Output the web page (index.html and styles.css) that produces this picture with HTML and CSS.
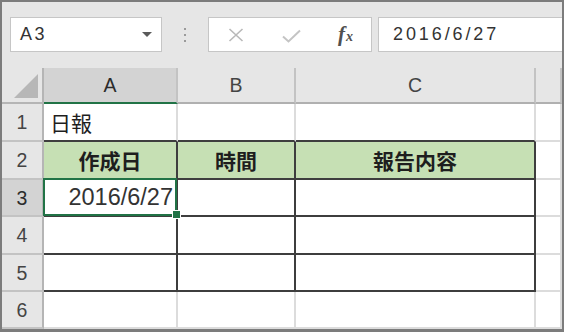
FILE: index.html
```html
<!DOCTYPE html>
<html lang="ja">
<head>
<meta charset="utf-8">
<link rel="stylesheet" href="styles.css">
</head>
<body>
<div class="frame">
  <div class="toolbar">
    <div class="namebox"><span class="name">A3</span><span class="caret"></span></div>
    <div class="grip"><i></i><i></i><i></i></div>
    <div class="fbtns">
      <svg class="cancel" width="16" height="14" viewBox="0 0 16 14"><path d="M1.5 1 L14.5 13 M14.5 1 L1.5 13" stroke="#b9b9b9" stroke-width="1.6" fill="none"/></svg>
      <svg class="enter" width="19" height="14" viewBox="0 0 19 14"><path d="M1 7.5 L6.5 12.5 L18 1.5" stroke="#c4c4c4" stroke-width="2" fill="none"/></svg>
      <span class="fx"><i>f</i><i class="sx">x</i></span>
    </div>
    <div class="finput">2016/6/27</div>
  </div>
  <div class="sheet">
    <div class="corner"><svg width="40" height="34" viewBox="0 0 40 34"><polygon points="36,6 36,30 12,30" fill="#b7b7b7"/></svg></div>
    <div class="ch sel">A</div>
    <div class="ch">B</div>
    <div class="ch">C</div>
    <div class="ch"></div>

    <div class="rh">1</div>
    <div class="c tt jp">日報</div>
    <div class="c tt"></div>
    <div class="c tt"></div>
    <div class="c"></div>

    <div class="rh">2</div>
    <div class="c tb g hd">作成日</div>
    <div class="c tb g hd">時間</div>
    <div class="c tb g hd">報告内容</div>
    <div class="c"></div>

    <div class="rh rsel">3</div>
    <div class="c tb cur num">2016/6/27</div>
    <div class="c tb"></div>
    <div class="c tb"></div>
    <div class="c"></div>

    <div class="rh">4</div>
    <div class="c tb"></div>
    <div class="c tb"></div>
    <div class="c tb"></div>
    <div class="c"></div>

    <div class="rh">5</div>
    <div class="c tb"></div>
    <div class="c tb"></div>
    <div class="c tb"></div>
    <div class="c"></div>

    <div class="rh">6</div>
    <div class="c"></div>
    <div class="c"></div>
    <div class="c"></div>
    <div class="c"></div>
  </div>
</div>
</body>
</html>
```
FILE: styles.css
```css
* { box-sizing: border-box; }
html, body { margin: 0; padding: 0; background: #fff; }
body { font-family: "Liberation Sans", Arial, sans-serif; }

.frame {
  width: 564px;
  height: 332px;
  border: 2px solid #7c7c7c;
  border-bottom-width: 3px;
  overflow: hidden;
  display: flex;
  flex-direction: column;
  background: #e6e6e6;
}

.toolbar {
  height: 66px;
  flex: none;
  display: flex;
  align-items: flex-start;
  padding: 15px 0 0 8px;
  background: #e6e6e6;
}

.namebox {
  width: 152px;
  height: 35px;
  background: #fff;
  border: 1px solid #c6c6c6;
  display: flex;
  align-items: center;
  padding: 0 9px 0 9px;
}
.name {
  font-size: 18px;
  letter-spacing: 2.4px;
  color: #333;
  flex: 1;
}
.caret {
  width: 0; height: 0;
  border-left: 5px solid transparent;
  border-right: 5px solid transparent;
  border-top: 5px solid #5a5a5a;
}

.grip {
  width: 46px;
  height: 35px;
  display: flex;
  flex-direction: column;
  align-items: center;
  justify-content: center;
  gap: 4px;
}
.grip i {
  width: 2px; height: 2px;
  background: #9a9a9a;
  display: block;
}

.fbtns {
  width: 164px;
  height: 35px;
  background: #fff;
  border: 1px solid #c6c6c6;
  display: flex;
  align-items: center;
}
.cancel { margin-left: 19px; }
.enter { margin-left: 38px; margin-top: 2px; }
.fx {
  margin-left: 37px;
  font-family: "Liberation Serif", serif;
  font-weight: bold;
  color: #505050;
  font-size: 21px;
  line-height: 1;
  display: flex;
  align-items: baseline;
}
.fx .sx { font-size: 14px; margin-left: 1px; }

.finput {
  flex: 1;
  height: 35px;
  margin-left: 6px;
  background: #fff;
  border: 1px solid #c6c6c6;
  border-right: none;
  display: flex;
  align-items: center;
  padding-left: 14px;
  font-size: 18px;
  letter-spacing: 2.9px;
  color: #333;
}

.sheet {
  flex: 1;
  display: grid;
  grid-template-columns: 42px 134px 118px 240px 26px;
  grid-template-rows: 36px 38px 38px 37px 38px 37px 37px;
  background: #fff;
}

.corner {
  background: #e6e6e6;
  border-right: 2px solid #b5b5b5;
  border-bottom: 2px solid #b5b5b5;
}
.corner svg { display: block; }

.ch {
  background: #e6e6e6;
  border-right: 2px solid #c3c3c3;
  border-bottom: 2px solid #b0b0b0;
  display: flex;
  align-items: center;
  justify-content: center;
  font-size: 19.5px;
  color: #444;
}
.ch.sel {
  background: #d3d3d3;
  border-bottom-color: #217346;
  color: #2b2b2b;
}

.rh {
  background: #e6e6e6;
  border-right: 2px solid #b5b5b5;
  border-bottom: 2px solid #c3c3c3;
  display: flex;
  align-items: center;
  justify-content: center;
  font-size: 19.5px;
  color: #444;
  padding-top: 1px;
}
.rh.rsel { background: #d3d3d3; color: #2b2b2b; }

.c {
  border-right: 2px solid #dcdcdc;
  border-bottom: 2px solid #dcdcdc;
  display: flex;
  align-items: center;
  color: #1e1e1e;
}
.c.tt { border-bottom-color: #3e3e3e; }
.c.tb { border-right-color: #3e3e3e; border-bottom-color: #3e3e3e; }
.c.g { background: #c6e0b4; }

.jp {
  font-family: "Noto Sans CJK JP", sans-serif;
  font-size: 21px;
  padding-left: 6px;
}
.hd {
  font-family: "Noto Sans CJK JP", sans-serif;
  font-size: 21px;
  font-weight: bold;
  justify-content: center;
}
.num {
  font-size: 23.5px;
  justify-content: flex-end;
  padding-right: 3px;
  color: #333;
}

.cur { position: relative; }
.cur::after {
  content: "";
  position: absolute;
  top: -2px; left: -1px; right: -1px; bottom: -1px;
  border: 2px solid #217346;
}
.cur::before {
  content: "";
  position: absolute;
  right: -5px; bottom: -4px;
  width: 7px; height: 7px;
  background: #217346;
  border: 1px solid #fff;
  z-index: 1;
}
```
